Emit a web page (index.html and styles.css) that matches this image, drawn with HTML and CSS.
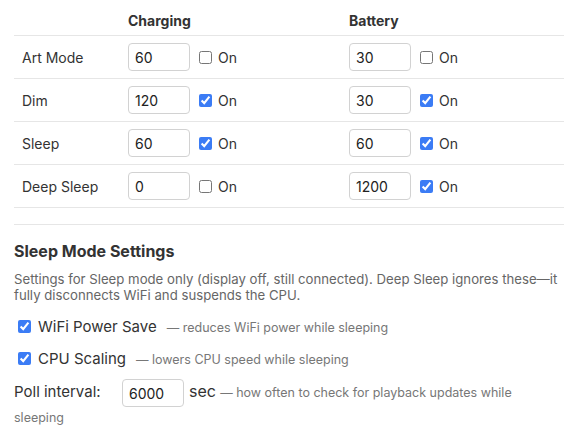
FILE: index.html
```html
<!DOCTYPE html>
<html>
<head>
<meta charset="utf-8">
<link rel="stylesheet" href="styles.css">
</head>
<body>
<div class="page">
  <table class="modes">
    <colgroup><col class="c-label"><col class="c-charge"><col class="c-batt"></colgroup>
    <thead>
      <tr><th></th><th>Charging</th><th>Battery</th></tr>
    </thead>
    <tbody>
      <tr>
        <td class="label">Art Mode</td>
        <td><input class="num" type="text" value="60"><label class="chk"><input type="checkbox">On</label></td>
        <td><input class="num" type="text" value="30"><label class="chk"><input type="checkbox">On</label></td>
      </tr>
      <tr>
        <td class="label">Dim</td>
        <td><input class="num" type="text" value="120"><label class="chk"><input type="checkbox" checked>On</label></td>
        <td><input class="num" type="text" value="30"><label class="chk"><input type="checkbox" checked>On</label></td>
      </tr>
      <tr>
        <td class="label">Sleep</td>
        <td><input class="num" type="text" value="60"><label class="chk"><input type="checkbox" checked>On</label></td>
        <td><input class="num" type="text" value="60"><label class="chk"><input type="checkbox" checked>On</label></td>
      </tr>
      <tr>
        <td class="label">Deep Sleep</td>
        <td><input class="num" type="text" value="0"><label class="chk"><input type="checkbox">On</label></td>
        <td><input class="num" type="text" value="1200"><label class="chk"><input type="checkbox" checked>On</label></td>
      </tr>
    </tbody>
  </table>

  <section class="sleep">
    <h3 class="title">Sleep Mode Settings</h3>
    <p class="desc">Settings for Sleep mode only (display off, still connected). Deep Sleep ignores these—it fully disconnects WiFi and suspends the CPU.</p>
    <label class="opt"><input type="checkbox" checked><span class="opt-name">WiFi Power Save</span><span class="hint">— reduces WiFi power while sleeping</span></label>
    <label class="opt"><input type="checkbox" checked><span class="opt-name">CPU Scaling</span><span class="hint">— lowers CPU speed while sleeping</span></label>
    <div class="poll"><span class="poll-label">Poll interval:</span><input class="num" type="text" value="6000"><span class="unit">sec</span> <span class="poll-hint">— how often to check for playback updates while sleeping</span></div>
  </section>
</div>
</body>
</html>
```

FILE: styles.css
```css
html, body {
  margin: 0;
  padding: 0;
  background: #ffffff;
}
body {
  font-family: Inter, "Liberation Sans", Arial, sans-serif;
  color: #333333;
}
.page {
  padding: 0 14px;
}
.modes {
  width: 550px;
  border-collapse: collapse;
  table-layout: fixed;
  font-size: 14px;
}
.c-label { width: 106px; }
.c-charge { width: 221px; }
.c-batt { width: 223px; }
.modes th {
  text-align: left;
  font-weight: 700;
  font-size: 14px;
  line-height: 17px;
  padding: 12px 8px 6px;
  border-bottom: 1px solid #e6e6e6;
}
.modes td {
  padding: 7px 8px;
  border-bottom: 1px solid #e6e6e6;
  vertical-align: middle;
  white-space: nowrap;
}
.label {
  font-size: 14px;
}
.num {
  box-sizing: border-box;
  width: 62px;
  height: 28px;
  padding: 0 6px;
  border: 1px solid #d2d2d2;
  border-radius: 4px;
  font-family: inherit;
  font-size: 14px;
  color: #222;
  background: #fff;
  vertical-align: middle;
  margin: 0;
}
.chk {
  display: inline-flex;
  align-items: center;
  margin-left: 9px;
  font-size: 14px;
  vertical-align: middle;
}
input[type="checkbox"] {
  width: 13px;
  height: 13px;
  margin: 0 6px 0 0;
  accent-color: #3b7cf5;
}
.sleep {
  margin-top: 16px;
  border-top: 1px solid #e6e6e6;
}
.title {
  margin: 17px 0 10px;
  font-size: 16px;
  line-height: 19px;
  font-weight: 700;
}
.desc {
  margin: 0 0 8px;
  font-size: 13.2px;
  line-height: 16px;
  color: #666666;
}
.opt {
  display: block;
  line-height: 23px;
  padding: 4px 0;
  font-size: 15px;
}
.opt input[type="checkbox"] {
  margin: 0 7px 0 4px;
  vertical-align: -1px;
}
.hint {
  margin-left: 10px;
  font-size: 12.5px;
  color: #777777;
}
.poll {
  margin-top: 4px;
  font-size: 15px;
  line-height: 20px;
}
.poll-label {
  display: inline-block;
  width: 108px;
}
.unit {
  margin-left: 5px;
  font-size: 16px;
}
.poll-hint {
  font-size: 12.5px;
  line-height: 17px;
  color: #777777;
}
```
